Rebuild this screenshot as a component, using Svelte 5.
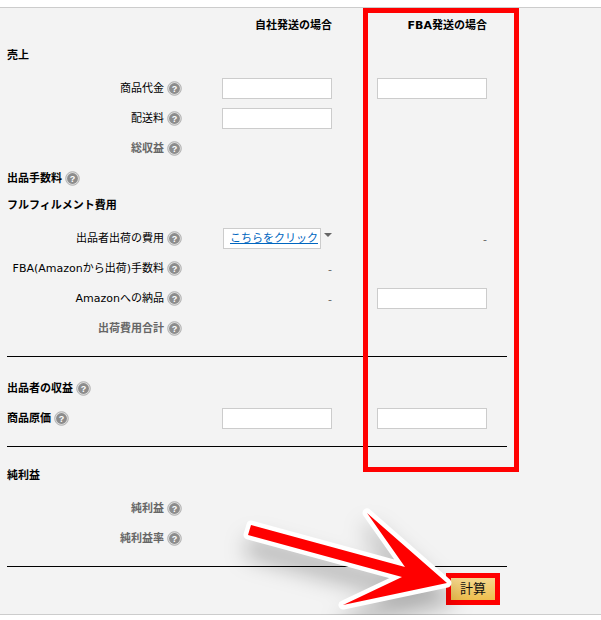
<script>
let rows = [
  { type: 'heading', label: '売上' },
  { type: 'item', label: '商品代金', id: 'price', help: true, own: 'input', fba: 'input' },
  { type: 'item', label: '配送料', id: 'shipping', help: true, own: 'input' },
  { type: 'item', label: '総収益', help: true, total: true },
  { type: 'heading', label: '出品手数料', help: true },
  { type: 'heading', label: 'フルフィルメント費用' },
  { type: 'item', label: '出品者出荷の費用', help: true, own: 'link', fba: 'dash' },
  { type: 'item', label: 'FBA(Amazonから出荷)手数料', help: true, own: 'dash' },
  { type: 'item', label: 'Amazonへの納品', id: 'inbound', help: true, own: 'dash', fba: 'input' },
  { type: 'item', label: '出荷費用合計', help: true, total: true },
  { type: 'line' },
  { type: 'heading', label: '出品者の収益', help: true },
  { type: 'heading', label: '商品原価', id: 'cost', help: true, own: 'input', fba: 'input' },
  { type: 'line' },
  { type: 'heading', label: '純利益' },
  { type: 'item', label: '純利益', help: true, total: true },
  { type: 'item', label: '純利益率', help: true, total: true },
  { type: 'line' }
];

let values = $state({});
</script>

{#snippet cell(kind, row, side)}
  {#if kind === 'input'}
    <input
      type="text"
      id="{row.id}-{side}"
      aria-label={side === 'fba' ? `${row.label} FBA発送` : undefined}
      bind:value={values[`${row.id}-${side}`]}
    />
  {:else if kind === 'dash'}
    <div class="dash">-</div>
  {:else if kind === 'link'}
    <div class="picker">
      <span class="link-box"><a href="#costs">こちらをクリック</a></span>
      <span class="arrow-down"></span>
    </div>
  {/if}
{/snippet}

<main>
  <form class="panel" onsubmit={(e) => e.preventDefault()}>
    <table>
      <colgroup>
        <col class="col-label" />
        <col class="col-own" />
        <col class="col-fba" />
        <col />
      </colgroup>
      <thead>
        <tr class="plain">
          <td></td>
          <th scope="col">自社発送の場合</th>
          <th scope="col">FBA発送の場合</th>
          <td></td>
        </tr>
      </thead>
      <tbody>
        {#each rows as row}
          {#if row.type === 'line'}
            <tr><td colspan="4"><hr /></td></tr>
          {:else}
            <tr class={[row.type, row.total && 'total', !row.help && 'plain']}>
              <th scope="row">
                <div class="label">
                  {#if row.id}
                    <label class="text" for="{row.id}-{row.own === 'input' ? 'own' : 'fba'}">{row.label}</label>
                  {:else}
                    <span class="text">{row.label}</span>
                  {/if}
                  {#if row.help}
                    <button type="button" class="help" aria-label="ヘルプ">
                      <svg width="15" height="15" viewBox="0 0 15 15">
                        <circle cx="7.5" cy="7.5" r="6.8" fill="#dedede" stroke="#b0b0b0" />
                        <circle cx="7.5" cy="7.5" r="5.4" fill="#8c8c8c" />
                        <text x="7.5" y="10.5" text-anchor="middle">?</text>
                      </svg>
                    </button>
                  {/if}
                </div>
              </th>
              <td>{@render cell(row.own, row, 'own')}</td>
              <td>{@render cell(row.fba, row, 'fba')}</td>
              <td></td>
            </tr>
          {/if}
        {/each}
      </tbody>
    </table>

    <div class="actions">
      <button type="submit" class="calc">計算</button>
    </div>

    <div class="highlight"></div>
    <svg class="pointer" width="240" height="130" viewBox="230 490 240 130">
      <path
        d="M251 525 L405 567 L367 513 L447 583 L343 605 L402 577 L248 535 Z"
        fill="#fff"
        stroke="#fff"
        stroke-width="9"
        stroke-linejoin="round"
      />
      <path d="M251 525 L405 567 L367 513 L447 583 L343 605 L402 577 L248 535 Z" fill="#f00" />
    </svg>
  </form>
</main>

<style>
:global(body) {
  margin: 0;
  background: #fff;
}

main {
  padding-top: 7px;
  font-family: "DejaVu Sans", "Noto Sans CJK JP", sans-serif;
  font-size: 11px;
  line-height: 16px;
  color: #000;
}

.panel {
  position: relative;
  padding: 5px 7px 9px;
  border-top: 1px solid #ccc;
  border-bottom: 1px solid #ccc;
  background: #f3f3f3;
}

table {
  width: 100%;
  max-width: 500px;
  table-layout: fixed;
  border-collapse: collapse;
}

.col-label {
  width: 175px;
}

.col-own {
  width: 150px;
}

.col-fba {
  width: 155px;
}

tr {
  height: 30px;
}

th,
td {
  padding: 0;
  text-align: right;
  vertical-align: middle;
  white-space: nowrap;
}

.plain th {
  padding-bottom: 4px;
}

.label {
  display: flex;
  justify-content: flex-end;
  align-items: center;
  gap: 3px;
}

.help,
.text {
  display: block;
}

.item .text,
.heading:not(.plain) .text {
  padding-top: 2px;
}

.item th {
  font-weight: normal;
}

.heading .label {
  justify-content: flex-start;
}

.item.total th {
  font-weight: bold;
  color: #666;
}

.help {
  padding: 0;
  border: 0;
  background: none;
  cursor: pointer;
}

.help svg {
  display: block;
}

.help text {
  fill: #fff;
  font-size: 9px;
  font-weight: bold;
}

input {
  display: block;
  box-sizing: border-box;
  width: 110px;
  height: 21px;
  margin-left: auto;
  padding: 2px 4px;
  border: 1px solid #ccc;
  background: #fff;
  font: inherit;
  text-align: right;
}

.dash {
  padding-top: 4px;
  color: #666;
}

.picker {
  display: flex;
  justify-content: flex-end;
  gap: 3px;
}

.link-box {
  padding: 2px 2px 1px 6px;
  border: 1px solid #ccc;
  background: #fff;
}

.link-box a {
  color: #0066c0;
  text-decoration: underline;
}

.arrow-down {
  height: 0;
  margin-top: 5px;
  border-top: 4px solid #666;
  border-left: 4px solid transparent;
  border-right: 4px solid transparent;
}

hr {
  margin: 0 0 3px;
  border: 0;
  border-top: 1px solid #000;
}

.actions {
  display: flex;
  justify-content: flex-end;
  max-width: 493px;
  margin-top: -10px;
}

.calc {
  box-sizing: border-box;
  width: 54px;
  height: 32px;
  padding: 0;
  border: 5px solid #f00;
  background: linear-gradient(#f5d78e, #eebf4e);
  color: #111;
  font-family: inherit;
  font-size: 13px;
  line-height: 20px;
  cursor: pointer;
}

.highlight {
  position: absolute;
  top: 0;
  left: 363px;
  box-sizing: border-box;
  width: 156px;
  height: 464px;
  border: 5px solid #f00;
  pointer-events: none;
}

.pointer {
  position: absolute;
  top: 482px;
  left: 230px;
  overflow: visible;
  filter: drop-shadow(2px 17px 11px rgba(0, 0, 0, 0.28));
  pointer-events: none;
}
</style>
